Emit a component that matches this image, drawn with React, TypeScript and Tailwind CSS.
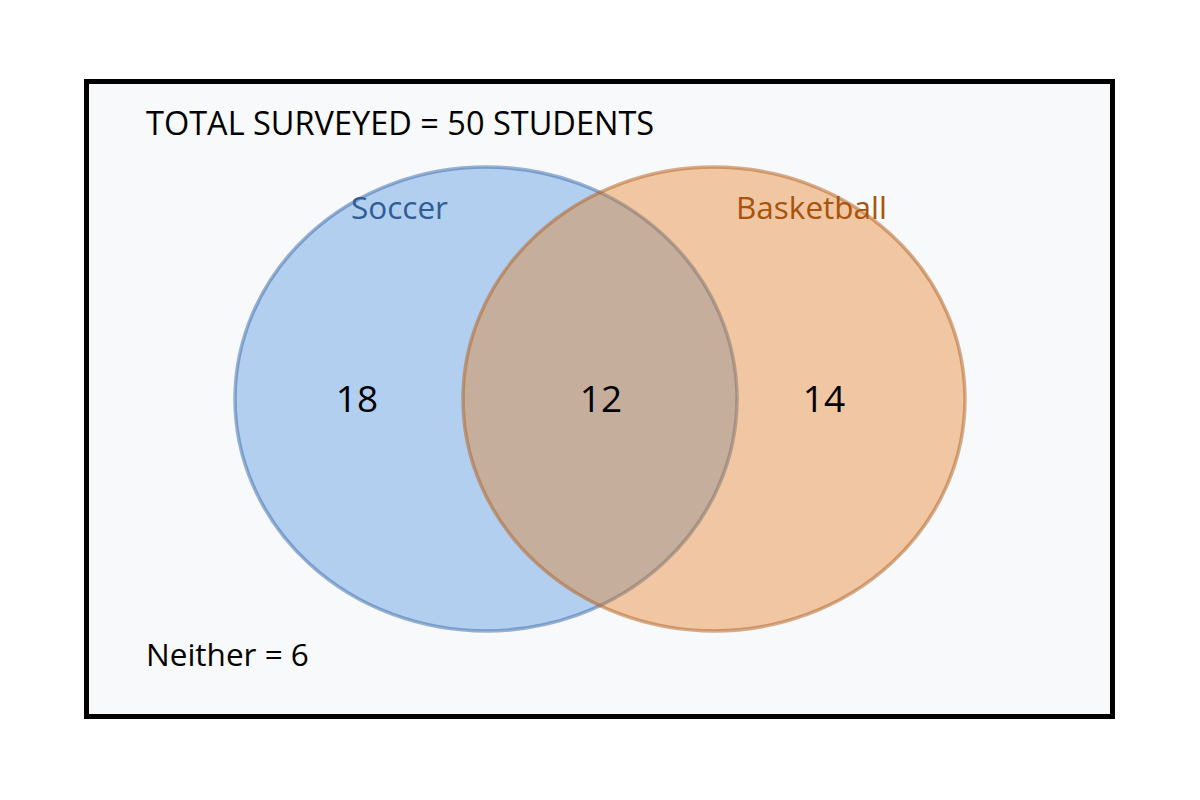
const FONT = "'Open Sans', 'Liberation Sans', sans-serif"

export default function App() {
  return (
    <div className="w-[1200px] h-[800px] bg-white pt-[79px] pl-[84px]">
      {/* Frame */}
      <div className="w-[1031px] h-[640px] border-[5px] border-black bg-[#f8f9fa]">
        <svg width="1021" height="630" viewBox="89 84 1021 630" style={{ fontFamily: FONT }}>
          {/* Soccer */}
          <ellipse
            cx="486"
            cy="399"
            rx="251"
            ry="232"
            fill="rgb(74,144,226)"
            fillOpacity="0.4"
            stroke="#3a6aa6"
            strokeOpacity="0.5"
            strokeWidth="3.5"
          />
          {/* Basketball */}
          <ellipse
            cx="714"
            cy="399"
            rx="251"
            ry="232"
            fill="rgb(228,124,30)"
            fillOpacity="0.4"
            stroke="#b0601f"
            strokeOpacity="0.5"
            strokeWidth="3.5"
          />

          <text x="146" y="134.5" fontSize="32.5" fill="#000">
            TOTAL SURVEYED = 50 STUDENTS
          </text>
          <text x="351" y="218.5" fontSize="31.5" fill="#2f5d96">
            Soccer
          </text>
          <text x="736" y="218.5" fontSize="31.5" fill="#a9530c">
            Basketball
          </text>

          <text x="357" y="411.5" fontSize="37" fill="#000" textAnchor="middle">
            18
          </text>
          <text x="601" y="411.5" fontSize="37" fill="#000" textAnchor="middle">
            12
          </text>
          <text x="824" y="411.5" fontSize="37" fill="#000" textAnchor="middle">
            14
          </text>

          <text x="146" y="665.5" fontSize="31.5" fill="#000">
            Neither = 6
          </text>
        </svg>
      </div>
    </div>
  )
}
